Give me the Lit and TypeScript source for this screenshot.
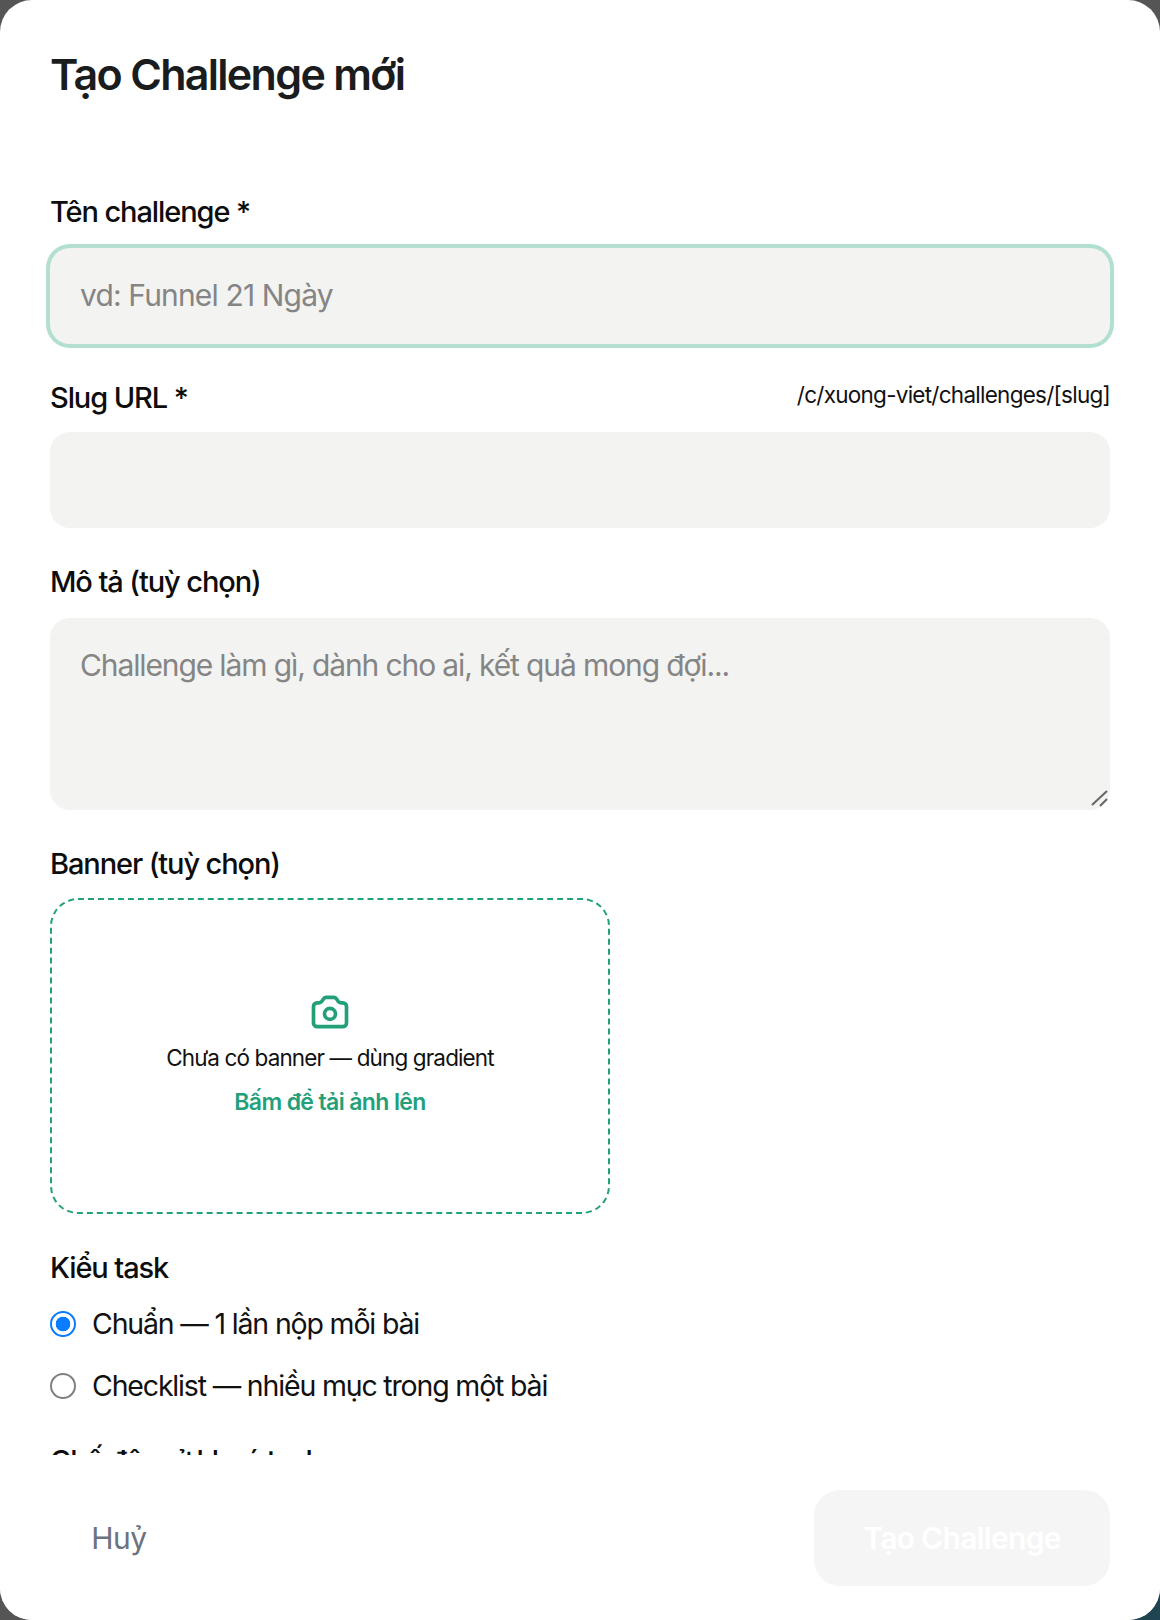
import { LitElement, html, css } from "lit";
import { customElement } from "lit/decorators.js";

@customElement("app-root")
export class AppRoot extends LitElement {
  static styles = css`
    :host {
      display: block;
      width: 1160px;
      height: 1620px;
      font-family: Inter, "Noto Sans", sans-serif;
      color: #111;
      background: radial-gradient(circle at 100% 100%, #1f4452 60px, #555 60px);
    }
    .modal {
      height: 1620px;
      box-sizing: border-box;
      background: #fff;
      border-radius: 32px;
      display: flex;
      flex-direction: column;
      overflow: hidden;
    }
    .body {
      flex: 1;
      min-height: 0;
      overflow: hidden;
      padding: 48px 50px 0;
    }
    h1 {
      margin: 0 0 94px;
      font-size: 43px;
      line-height: 52px;
      font-weight: 600;
      letter-spacing: -1.7px;
      color: #1a1c1e;
    }
    .label {
      display: block;
      font-size: 29px;
      line-height: 36px;
      font-weight: 450;
      letter-spacing: -1.1px;
      color: #0d0d0d;
    }
    .gap {
      margin-bottom: 18px;
    }
    .gap-s {
      margin-bottom: 16px;
    }
    .slug-row {
      display: flex;
      justify-content: space-between;
      align-items: flex-start;
    }
    .hint {
      font-size: 22.5px;
      line-height: 30px;
      letter-spacing: -0.74px;
      color: #111;
    }
    input.text,
    textarea {
      display: block;
      box-sizing: border-box;
      width: 1060px;
      border: 0;
      outline: 0;
      margin: 0 0 36px;
      padding: 0 30px 2px;
      background: #f3f3f1;
      border-radius: 20px;
      font: 400 30px/40px Inter, "Noto Sans", sans-serif;
      letter-spacing: -0.85px;
      color: #111;
    }
    input.text {
      height: 96px;
    }
    input.focus {
      box-shadow: 0 0 0 4px #b2dfd0;
    }
    .area {
      position: relative;
      width: 1060px;
    }
    textarea {
      height: 192px;
      padding: 27px 30px;
      resize: none;
      letter-spacing: -1.12px;
    }
    .grip {
      position: absolute;
      right: 0;
      bottom: 0;
      width: 20px;
      height: 20px;
      color: #666;
    }
    ::placeholder {
      color: #858585;
      opacity: 1;
    }
    .banner {
      box-sizing: border-box;
      width: 560px;
      height: 316px;
      margin-bottom: 36px;
      padding-bottom: 4px;
      border: 2px dashed #23a07a;
      border-radius: 28px;
      display: flex;
      flex-direction: column;
      align-items: center;
      justify-content: center;
    }
    .banner svg {
      display: block;
      width: 44px;
      height: 44px;
      color: #23a07a;
    }
    .banner .none {
      margin-top: 8px;
      font-size: 22.5px;
      line-height: 32px;
      letter-spacing: -0.87px;
      color: #111;
    }
    .banner .up {
      margin-top: 12px;
      font-size: 23px;
      line-height: 32px;
      font-weight: 600;
      letter-spacing: -0.63px;
      color: #23a07a;
    }
    .radios {
      display: flex;
      flex-direction: column;
      gap: 22px;
      margin-bottom: 37px;
    }
    .radio {
      display: flex;
      align-items: center;
      gap: 16px;
      font-size: 28.5px;
      line-height: 40px;
      letter-spacing: -1.17px;
      color: #111;
    }
    .radio input {
      appearance: none;
      box-sizing: border-box;
      flex: none;
      width: 26px;
      height: 26px;
      margin: 0;
      border: 2px solid #808080;
      border-radius: 50%;
      background: #fff;
    }
    .radio input:checked {
      border: 2.5px solid #0a7cff;
      background: radial-gradient(circle, #0a7cff 0 7px, #fff 7.6px);
    }
    .footer {
      flex: none;
      height: 165px;
      box-sizing: border-box;
      padding: 35px 50px 0;
      background: #fff;
      display: flex;
      justify-content: space-between;
      align-items: flex-start;
    }
    button {
      height: 96px;
      border: 0;
      font: 500 30px/40px Inter, "Noto Sans", sans-serif;
      letter-spacing: -0.7px;
      padding: 0;
    }
    .cancel {
      width: 138px;
      background: transparent;
      color: #6b7280;
      font-weight: 400;
      letter-spacing: -0.4px;
    }
    .create {
      width: 296px;
      border-radius: 26px;
      background: #f5f5f5;
      color: #fff;
      font-weight: 600;
    }
  `;

  render() {
    return html`
      <div class="modal">
        <div class="body">
          <h1>Tạo Challenge mới</h1>
          <label class="label gap">Tên challenge *</label>
          <input class="text focus" type="text" placeholder="vd: Funnel 21 Ngày" />
          <div class="slug-row gap-s">
            <label class="label">Slug URL *</label>
            <span class="hint">/c/xuong-viet/challenges/[slug]</span>
          </div>
          <input class="text" type="text" />
          <label class="label gap">Mô tả (tuỳ chọn)</label>
          <div class="area">
            <textarea placeholder="Challenge làm gì, dành cho ai, kết quả mong đợi..."></textarea>
            <svg class="grip" viewBox="0 0 20 20" fill="none" stroke="currentColor" stroke-width="2">
              <path d="M2 15L17 1M10 16L17 9" />
            </svg>
          </div>
          <label class="label gap-s">Banner (tuỳ chọn)</label>
          <div class="banner">
            <svg viewBox="0 0 24 24" fill="none" stroke="currentColor" stroke-width="2" stroke-linecap="round" stroke-linejoin="round">
              <path d="M3 9a2 2 0 0 1 2-2h.93a2 2 0 0 0 1.66-.89l.82-1.22A2 2 0 0 1 10.07 4h3.86a2 2 0 0 1 1.66.89l.82 1.22a2 2 0 0 0 1.66.89H19a2 2 0 0 1 2 2v9a2 2 0 0 1-2 2H5a2 2 0 0 1-2-2z" />
              <circle cx="12" cy="13" r="3" />
            </svg>
            <div class="none">Chưa có banner — dùng gradient</div>
            <div class="up">Bấm để tải ảnh lên</div>
          </div>
          <label class="label gap">Kiểu task</label>
          <div class="radios">
            <label class="radio"><input type="radio" name="k" checked />Chuẩn — 1 lần nộp mỗi bài</label>
            <label class="radio"><input type="radio" name="k" />Checklist — nhiều mục trong một bài</label>
          </div>
          <label class="label">Chế độ mở khoá task</label>
        </div>
        <div class="footer">
          <button class="cancel">Huỷ</button>
          <button class="create">Tạo Challenge</button>
        </div>
      </div>
    `;
  }
}
